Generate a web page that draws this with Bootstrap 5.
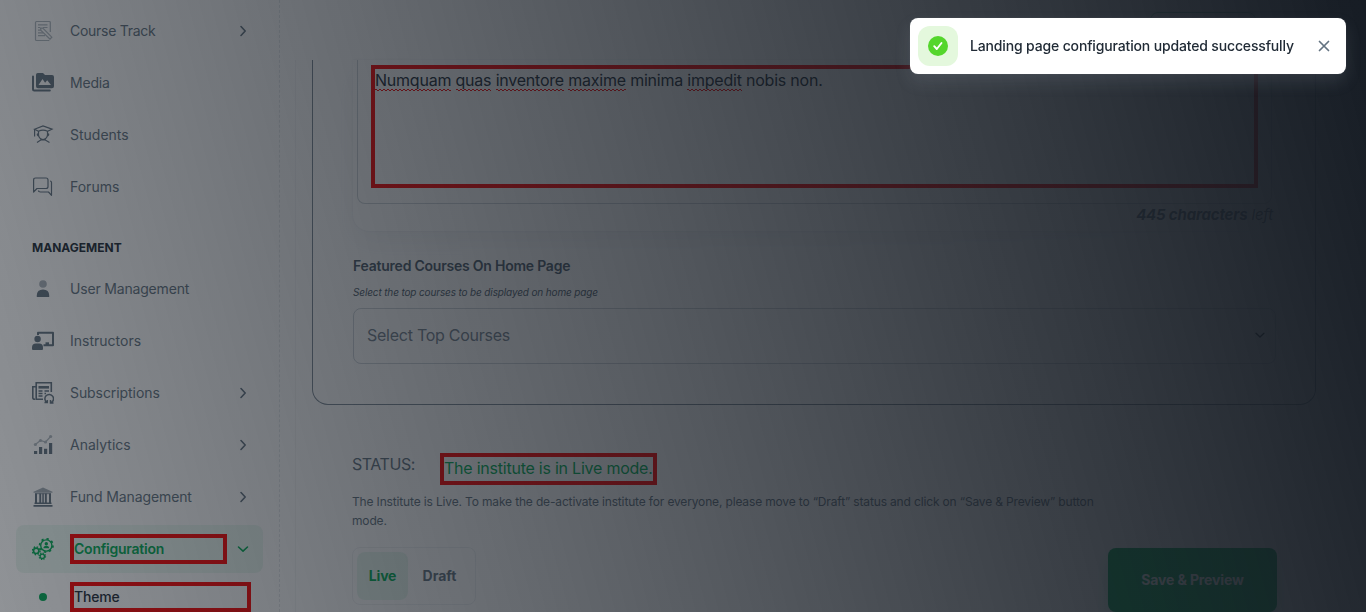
<!DOCTYPE html>
<html lang="en">
<head>
<meta charset="utf-8">
<meta name="viewport" content="width=device-width, initial-scale=1">
<title>Landing page configuration</title>
<link href="https://cdn.jsdelivr.net/npm/bootstrap@5.3.0/dist/css/bootstrap.min.css" rel="stylesheet">
<style>
  body{font-family:Inter,"Liberation Sans",sans-serif;font-size:14px;line-height:22px;letter-spacing:-.013em;color:#212b36;background:#fff}
  .app{height:612px}
  /* sidebar */
  .side{width:280px;border-right:1px dashed rgba(145,158,171,.24);padding:7px 16px 0;flex:none}
  .side-item{height:48px;margin-bottom:4px;padding:0 12px 0 16px;color:#637381;border-radius:8px}
  .side-item svg.ico{width:22px;height:22px;flex:none;margin-right:16px}
  .side-item .chev{margin-left:auto}
  .side-item.on{color:#00ab55;background:rgba(0,171,85,.08);font-weight:600;letter-spacing:-.016em}
  .side-head{font-size:12px;font-weight:700;line-height:18px;letter-spacing:0;padding:28px 0 8px 16px;margin-top:-4px}
  .side-sub{height:40px;padding:0 12px 0 23px;font-weight:500}
  .dot8{width:8px;height:8px;border-radius:50%;background:#00ab55;margin-right:23px}
  .marked{border:4px solid red}
  /* main */
  .page-main{flex:1;padding:60px 50px 0 15px}
  .page-rail{border-left:1px solid rgba(145,158,171,.1);height:552px;padding-left:16px}
  .panel{height:345px;border:1px solid #7d8a96;border-top:0;border-radius:0 0 16px 16px;padding:0 39px 0 40px;width:1004px}
  .editor-card{height:171px;border-radius:0 0 16px 16px;padding:0 4px;box-shadow:0 12px 24px -4px rgba(145,158,171,.12),0 0 2px rgba(145,158,171,.2)}
  .editor{height:144px;border:1px solid rgba(145,158,171,.45);border-top:0;border-radius:0 0 8px 8px;padding:5px 13px}
  .editor-text{height:123px;font-size:16px;line-height:22px;letter-spacing:-.0138em}
  .typo{padding-bottom:1px;background:repeating-linear-gradient(90deg,red 0 2px,transparent 2px 4px) 0 calc(100% - 1px)/100% 1px no-repeat,repeating-linear-gradient(90deg,transparent 0 2px,red 2px 4px) 0 100%/100% 1px no-repeat}
  .count{font-size:15px;line-height:22px;color:#637381}
  .lbl{font-weight:600;color:#4d5c6b;margin-top:24px;letter-spacing:-.0165em}
  .hint{font-size:10px;font-style:italic;color:#4d5c6b;line-height:15px;letter-spacing:-.0135em;margin:8px 0 8px}
  .picker{height:56px;border:1px solid rgba(145,158,171,.45);border-radius:8px;padding:0 8px 2px 13px;font-size:16px;letter-spacing:-.016em;color:#75828f}
  .foot{padding:48px 39px 0 40px;width:1004px}
  .stat{font-size:16px;line-height:22px;color:#637381}
  .live-msg{font-size:16px;line-height:22px;letter-spacing:-.0145em;color:#00ab55;margin-left:25px;width:217px;height:32px}
  .desc{font-size:12px;line-height:19px;color:#637381;width:762px;letter-spacing:-.0127em;margin-top:7px}
  .switcher{width:124px;height:58px;border:1px solid rgba(145,158,171,.14);border-radius:8px;padding:4px;font-weight:700;color:#637381}
  .opt{height:48px;border-radius:8px}
  .opt-on{width:52px;color:#00ab55;background:rgba(0,171,85,.09)}
  .opt-off{width:64px;letter-spacing:0}
  .save{width:169px;height:64px;margin-top:1px;border:0;border-radius:8px;background:#00ab55;color:#fff;font-weight:700;font-size:14px;letter-spacing:-.01em;box-shadow:0 8px 16px rgba(0,171,85,.24)}
  /* dimmer above the page */
  .dimmer{position:fixed;inset:0;background:linear-gradient(75deg,rgba(22,28,36,.48) 0%,#161c24 100%)}
  .head-btn{position:fixed;left:1150px;top:12px;width:106px;height:40px;border:1px solid rgba(0,171,85,.5);border-radius:8px}
  .note{position:fixed;left:910px;top:18px;width:436px;height:56px;background:#fff;border-radius:8px;padding:0 14px 0 8px;font-weight:500;letter-spacing:-.011em;box-shadow:0 8px 16px rgba(145,158,171,.16),0 0 2px rgba(145,158,171,.16)}
  .tick{width:40px;height:40px;border-radius:12px;background:#e4f8dd;margin-right:12px}
</style>
</head>
<body class="overflow-hidden">
<svg class="d-none">
  <symbol id="right" viewBox="0 0 16 16"><path d="M6 3.500 10.200 8 6 12.500" fill="none" stroke="currentColor" stroke-width="1.600" stroke-linecap="round" stroke-linejoin="round"/></symbol>
  <symbol id="down" viewBox="0 0 16 16"><path d="M3.500 6 8 10.200 12.500 6" fill="none" stroke="currentColor" stroke-width="1.600" stroke-linecap="round" stroke-linejoin="round"/></symbol>
</svg>
<div class="app d-flex overflow-hidden">
  <nav class="side">
    <div class="side-item d-flex align-items-center">
      <svg class="ico" viewBox="0 0 22 22" fill="none" stroke="currentColor" stroke-width="1.200" opacity=".5"><path d="M18.300 12V2.500Q18.300 1.500 17.300 1.500H4.500Q3.500 1.500 3.500 2.500V19.500Q3.500 20.500 4.500 20.500H17.300"/><path d="M6 4.800H15.500M6 7.500H8M6 10.200H9M6 12.900H11M6 15.600H13M11 7.500H15.500"/><path d="M8.500 8 10.800 8.200 19.800 17.200 18 19.200 9 10.500Z"/></svg>
      <span style="letter-spacing:-.02em">Course Track</span><svg class="chev" width="16" height="16"><use href="#right"/></svg></div>
    <div class="side-item d-flex align-items-center">
      <svg class="ico" viewBox="0 0 22 22"><path d="M1 4.500V17.300Q1 18.500 2.200 18.500H17.800" fill="none" stroke="currentColor" stroke-width="2" stroke-linecap="round"/><path fill="currentColor" fill-rule="evenodd" d="M5.800 1H11l2 2h7q2 0 2 2v9.200q0 2-2 2H6q-2 0-2-2V2.800Q4 1 5.800 1ZM6.500 13H19l-3.800-4.700-2.100 2.500-2.600-3.800Z"/></svg>
      <span>Media</span></div>
    <div class="side-item d-flex align-items-center">
      <svg class="ico" viewBox="0 0 22 22" fill="none" stroke="currentColor" stroke-width="1.200"><path d="M2.500 5.200 11 2l9 3.200-4.500 2.100Q11 4.800 6.500 7.300ZM2.600 5.500V12.500M6.500 7.300V11q.5 4 4.500 4.500 4-.5 4.500-4.500V7.300M5.600 9.500q-1 1.700 1.200 2.700M16.400 9.500q1 1.700-1.200 2.700M8.800 14.800V16L5 18.500M13.200 14.800V16L17.500 18.500M8.800 16H13.200"/></svg>
      <span style="letter-spacing:0">Students</span></div>
    <div class="side-item d-flex align-items-center">
      <svg class="ico" viewBox="0 0 22 22" fill="none" stroke="currentColor" stroke-width="1.200" stroke-linejoin="round"><path d="M1.600 16V4Q1.600 2 3.600 2H14Q16 2 16 4V10.500Q16 12.500 14 12.500H5Z"/><path d="M18 5q1.500 0 1.500 1.500V19.300L16.500 16H8.500Q6.500 16 6.500 14.500"/></svg>
      <span style="letter-spacing:0">Forums</span></div>

    <div class="side-head">MANAGEMENT</div>

    <div class="side-item d-flex align-items-center">
      <svg class="ico" viewBox="0 0 22 22" fill="currentColor"><circle cx="11" cy="6" r="3.800" opacity=".55"/><path d="M4.800 19v-1.500q0-6 6.200-6t6.200 6V19Z"/></svg>
      <span>User Management</span></div>
    <div class="side-item d-flex align-items-center">
      <svg class="ico" viewBox="0 0 22 22" fill="currentColor"><circle cx="5.600" cy="9" r="3.200"/><path d="M0 19V17.500Q0 13.500 4 13.500H7.200Q11 13.500 11 17.500V19q0 1-1 1H1Q0 20 0 19Z"/><path d="M6 5V2.800H21V15.200H11.500" fill="none" stroke="currentColor" stroke-width="2" stroke-linejoin="round"/><path d="M13.500 12.300H17V15H13.500Z"/></svg>
      <span style="letter-spacing:0">Instructors</span></div>
    <div class="side-item d-flex align-items-center">
      <svg class="ico" viewBox="0 0 22 22" fill="none" stroke="currentColor" stroke-width="1.600"><path d="M19.300 10V.8H4.200V17.300H11M4 4.700H.8V15.800Q.8 17.300 3 17.300"/><path d="M6.500 5.300H17" stroke-width="2.600"/><path d="M6.500 9H10.500M6.500 11.500H10.500M6.500 14H10.500M12.500 9H17M12.500 11.500H14"/><path d="M15 20.500A4.300 4.300 0 1 1 18.800 20.800M12.500 20.600H15.300V18M18.500 18V21H21.500" stroke-width="1.500"/></svg>
      <span style="letter-spacing:-.005em">Subscriptions</span><svg class="chev" width="16" height="16"><use href="#right"/></svg></div>
    <div class="side-item d-flex align-items-center">
      <svg class="ico" viewBox="0 0 22 22" fill="currentColor"><path d="M2 17h3.200v3H2ZM7 13h3.200v7H7ZM12 14.800h3.200V20H12ZM17 9h3.200v11H17Z"/><g opacity=".5"><path d="M3.300 10.500 8.500 6.500 13.500 8 18.700 2.500" fill="none" stroke="currentColor" stroke-width="1.200"/><circle cx="3.400" cy="10.500" r="1.600"/><circle cx="8.500" cy="6.500" r="1.600"/><circle cx="13.500" cy="8" r="1.600"/><circle cx="18.600" cy="2.500" r="1.600"/></g></svg>
      <span style="letter-spacing:0">Analytics</span><svg class="chev" width="16" height="16"><use href="#right"/></svg></div>
    <div class="side-item d-flex align-items-center">
      <svg class="ico" viewBox="0 0 22 22" fill="currentColor"><path d="M11 1.500 20.500 5.800V6.700H1.500V5.800Z" opacity=".6"/><path d="M3 7.500H5V17H3ZM7.300 7.500H9.200V17H7.300ZM10.300 7.500H11.800V17H10.300ZM12.900 7.500H14.800V17H12.900ZM17 7.500H19V17H17ZM2.500 16.600H19.500V18H2.500ZM1.500 19H20.500V20.700H1.500Z"/><path d="M3 7.700H19" stroke="currentColor" stroke-width=".8"/></svg>
      <span style="letter-spacing:-.008em">Fund Management</span><svg class="chev" width="16" height="16"><use href="#right"/></svg></div>
    <div class="side-item on d-flex align-items-center">
      <svg class="ico" viewBox="0 0 22 22" fill="none" stroke="currentColor"><circle cx="14.300" cy="7.500" r="5.600" stroke-width="1.400"/><circle cx="14.300" cy="7.500" r="6.700" stroke-width="1.700" stroke-dasharray="2.300 2.962"/><circle cx="14.300" cy="5.700" r="1.700" fill="currentColor" stroke="none"/><path d="M11.400 10.300q0-2.600 2.900-2.600t2.900 2.600Z" fill="currentColor" stroke="none"/><circle cx="4.200" cy="12.800" r="2.700" stroke-width="1.700"/><circle cx="4.200" cy="12.800" r="3.900" stroke-width="1.400" stroke-dasharray="1.500 1.563"/><circle cx="10.300" cy="18.300" r="2.200" stroke-width="1.300"/><circle cx="10.300" cy="18.300" r="3.200" stroke-width="1.300" stroke-dasharray="1.200 1.313"/></svg>
      <span class="marked d-flex align-items-center" style="width:157px;height:30px">Configuration</span><svg class="chev" width="16" height="16"><use href="#down"/></svg></div>
    <div class="side-sub d-flex align-items-center">
      <span class="dot8 flex-shrink-0"></span><span class="marked d-flex align-items-center flex-shrink-0" style="width:181px;height:30px">Theme</span></div>
  </nav>

  <main class="page-main">
    <div class="page-rail">
      <section class="panel">
        <div class="editor-card">
          <div class="editor"><div class="editor-text marked"><span class="typo">Numquam</span> <span class="typo">quas</span> <span class="typo">inventore</span> <span class="typo">maxime</span> minima <span class="typo">impedit</span> nobis non.</div></div>
          <div class="count text-end fst-italic" style="margin-right:-1px"><b>445 characters</b> left</div>
        </div>
        <div class="lbl">Featured Courses On Home Page</div>
        <div class="hint">Select the top courses to be displayed on home page</div>
        <div class="picker d-flex align-items-center justify-content-between"><span>Select Top Courses</span><svg width="14" height="14" style="color:#212b36"><use href="#down"/></svg></div>
      </section>
      <section class="foot">
        <div class="d-flex align-items-start"><span class="stat" style="letter-spacing:-.027em">STATUS:</span><span class="live-msg marked text-nowrap">The institute is in Live mode.</span></div>
        <p class="desc mb-0">The Institute is Live. To make the de-activate institute for everyone, please move to “Draft” status and click on “Save &amp; Preview” button mode.</p>
        <div class="d-flex justify-content-between align-items-start" style="margin-top:17px">
          <div class="switcher d-flex">
            <span class="opt opt-on d-flex align-items-center justify-content-center">Live</span>
            <span class="opt opt-off d-flex align-items-center justify-content-center">Draft</span>
          </div>
          <button class="save">Save &amp; Preview</button>
        </div>
      </section>
    </div>
  </main>
</div>
<div class="head-btn"></div>
<div class="dimmer"></div>
<div class="note d-flex align-items-center">
  <span class="tick d-flex align-items-center justify-content-center flex-shrink-0"><svg width="20" height="20" viewBox="0 0 20 20"><circle cx="10" cy="10" r="10" fill="#54d62c"/><path d="M6.200 10.200 8.800 13 13.500 7" fill="none" stroke="#fff" stroke-width="1.900" stroke-linecap="round" stroke-linejoin="round"/></svg></span>
  <span class="text-nowrap">Landing page configuration updated successfully</span>
  <svg class="ms-auto" width="16" height="16" viewBox="0 0 16 16"><path d="M3.500 3.500 12.500 12.500M12.500 3.500 3.500 12.500" stroke="#637381" stroke-width="1.700" stroke-linecap="round"/></svg>
</div>
<script src="https://cdn.jsdelivr.net/npm/bootstrap@5.3.0/dist/js/bootstrap.bundle.min.js"></script>
</body>
</html>
